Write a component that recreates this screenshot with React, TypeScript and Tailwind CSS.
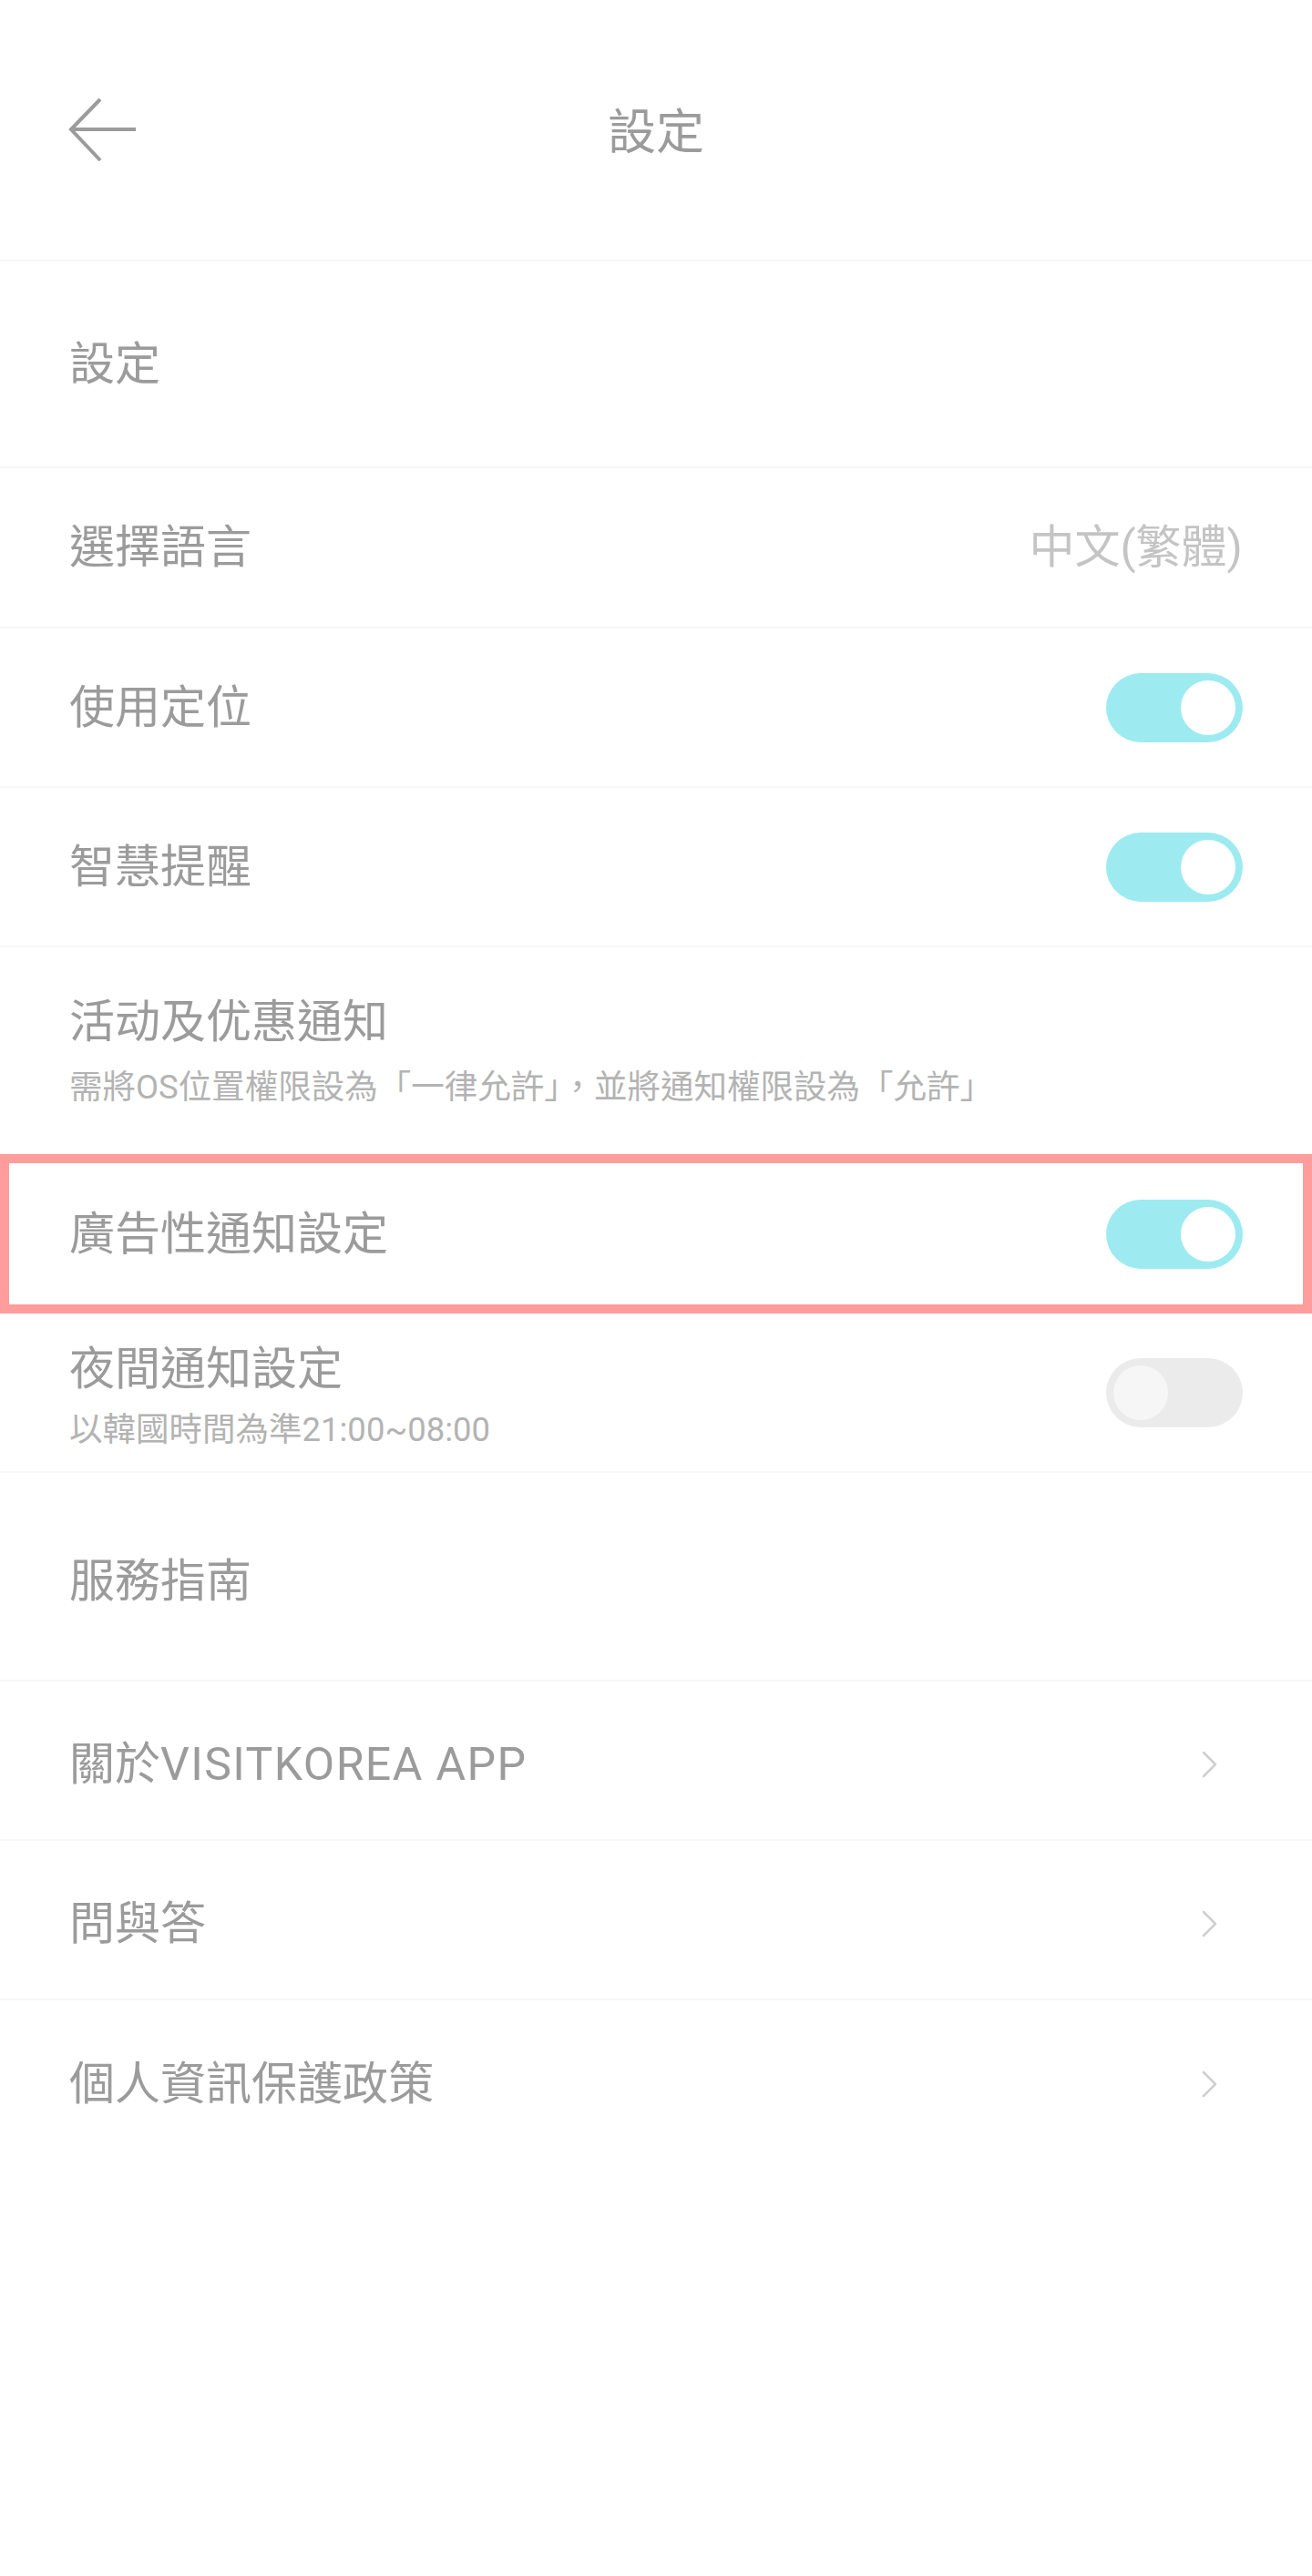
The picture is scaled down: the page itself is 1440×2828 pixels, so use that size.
import type { ReactNode } from "react";

const font = "font-['Roboto','Noto_Sans_CJK_TC',sans-serif]";

function Toggle({ on }: { on: boolean }) {
  return (
    <div
      className={`flex h-[76px] w-[150px] shrink-0 items-center rounded-full px-[8px] ${
        on ? "justify-end bg-[#9debf0]" : "justify-start bg-[#ebebeb]"
      }`}
    >
      <div className={`h-[60px] w-[60px] rounded-full ${on ? "bg-white" : "bg-[#f6f6f6]"}`} />
    </div>
  );
}

function Chevron() {
  return (
    <svg width="19" height="32" viewBox="0 0 19 32" fill="none" className="mr-[27px] shrink-0">
      <path d="M3 3 L16 16 L3 29" stroke="#cfcfcf" strokeWidth="2.5" strokeLinecap="round" strokeLinejoin="round" />
    </svg>
  );
}

function Row({
  height,
  border = true,
  children,
  className = "",
}: {
  height: string;
  border?: boolean;
  children: ReactNode;
  className?: string;
}) {
  return (
    <div
      className={`flex items-center justify-between px-[76px] ${height} ${
        border ? "border-b-2 border-[#f7f7f7]" : ""
      } ${className}`}
    >
      {children}
    </div>
  );
}

const label = "text-[50px] leading-[60px] text-[#9b9b9b]";
const sub = "text-[36.5px] leading-[42px] text-[#b3b3b3]";

export default function App() {
  return (
    <div className={`min-h-[2828px] w-full bg-white ${font}`}>
      {/* Header */}
      <div className="grid h-[287px] grid-cols-[1fr_auto_1fr] items-center border-b-2 border-[#f7f7f7]">
        <div className="pl-[74px]">
          <svg width="78" height="74" viewBox="0 0 78 74" fill="none">
            <path d="M4 36 H75" stroke="#9b9b9b" strokeWidth="4" />
            <path d="M36 3 L4 36 L36 70" stroke="#9b9b9b" strokeWidth="4" />
          </svg>
        </div>
        <div className="pt-[6px] text-[53px] leading-[64px] text-[#9b9b9b]">設定</div>
        <div />
      </div>

      <Row height="h-[227px]">
        <span className={label}>設定</span>
      </Row>

      <Row height="h-[176px]">
        <span className={label}>選擇語言</span>
        <span className="text-[50px] leading-[60px] text-[#c4c4c4]">中文(繁體)</span>
      </Row>

      <Row height="h-[175px]">
        <span className={label}>使用定位</span>
        <Toggle on />
      </Row>

      <Row height="h-[175px]">
        <span className={label}>智慧提醒</span>
        <Toggle on />
      </Row>

      <Row height="h-[227px]" border={false}>
        <div className="flex flex-col gap-[21px]">
          <span className={label}>活动及优惠通知</span>
          <span className={sub}>需將OS位置權限設為「一律允許」，並將通知權限設為「允許」</span>
        </div>
      </Row>

      <div className="flex h-[175px] items-center justify-between border-[10px] border-[#ff9c9c] pl-[66px] pr-[66px]">
        <span className={label}>廣告性通知設定</span>
        <Toggle on />
      </div>

      <Row height="h-[175px]">
        <div className="flex flex-col gap-[16px] pt-[6px]">
          <span className={label}>夜間通知設定</span>
          <span className={sub}>以韓國時間為準21:00~08:00</span>
        </div>
        <Toggle on={false} />
      </Row>

      <Row height="h-[229px]" className="pt-[10px]">
        <span className={label}>服務指南</span>
      </Row>

      <Row height="h-[175px]" className="pt-[8px]">
        <span className={label}>
          關於<span className="tracking-[1.4px]">VISITKOREA APP</span>
        </span>
        <Chevron />
      </Row>

      <Row height="h-[175px]" className="pt-[8px]">
        <span className={label}>問與答</span>
        <Chevron />
      </Row>

      <Row height="h-[175px]" border={false} className="pt-[8px]">
        <span className={label}>個人資訊保護政策</span>
        <Chevron />
      </Row>
    </div>
  );
}
